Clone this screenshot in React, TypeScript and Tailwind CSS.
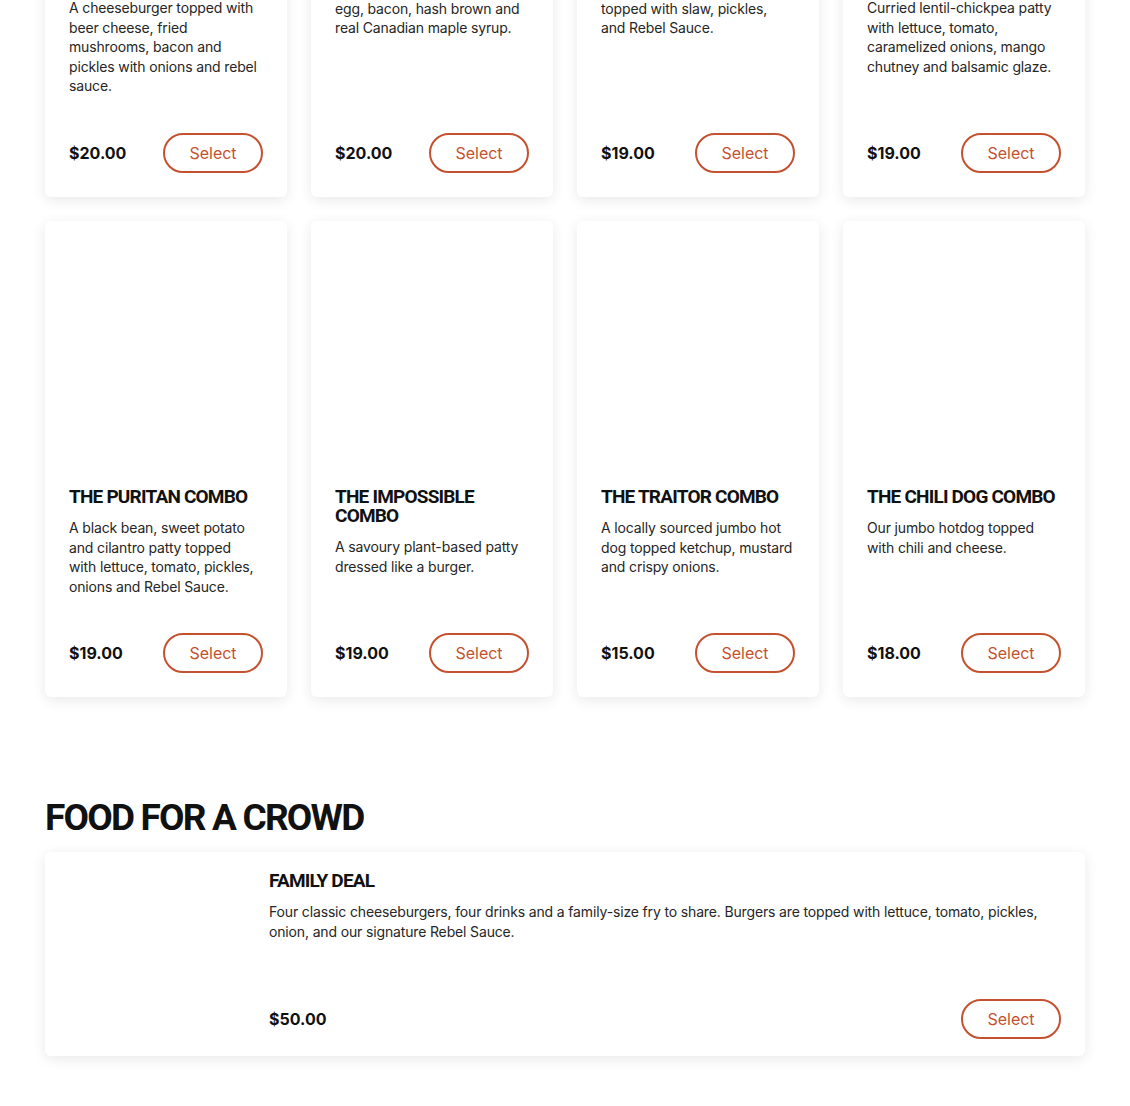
import React from "react";

interface Combo {
  name: string;
  description: string;
  price: string;
}

const combos: Combo[] = [
  {
    name: "The Drunken Mushroom Combo",
    description:
      "A cheeseburger topped with\nbeer cheese, fried\nmushrooms, bacon and\npickles with onions and rebel\nsauce.",
    price: "$20.00",
  },
  {
    name: "The Canuck Combo",
    description:
      "A cheeseburger with a fried\negg, bacon, hash brown and\nreal Canadian maple syrup.",
    price: "$20.00",
  },
  {
    name: "The Chicken Combo",
    description:
      "A crispy chicken sandwich\ntopped with slaw, pickles,\nand Rebel Sauce.",
    price: "$19.00",
  },
  {
    name: "The Curried Lentil Combo",
    description:
      "Curried lentil-chickpea patty\nwith lettuce, tomato,\ncaramelized onions, mango\nchutney and balsamic glaze.",
    price: "$19.00",
  },
  {
    name: "The Puritan Combo",
    description:
      "A black bean, sweet potato\nand cilantro patty topped\nwith lettuce, tomato, pickles,\nonions and Rebel Sauce.",
    price: "$19.00",
  },
  {
    name: "The Impossible Combo",
    description: "A savoury plant-based patty\ndressed like a burger.",
    price: "$19.00",
  },
  {
    name: "The Traitor Combo",
    description:
      "A locally sourced jumbo hot\ndog topped ketchup, mustard\nand crispy onions.",
    price: "$15.00",
  },
  {
    name: "The Chili Dog Combo",
    description: "Our jumbo hotdog topped\nwith chili and cheese.",
    price: "$18.00",
  },
];

const displayFont = "font-['Roboto','Liberation_Sans',sans-serif] font-bold uppercase";

const SelectButton: React.FC = () => (
  <button className="w-[100px] h-10 rounded-full border-2 border-[#c4512f] text-[#c4512f] text-base bg-white">
    Select
  </button>
);

const ComboCard: React.FC<{ combo: Combo }> = ({ combo }) => (
  <div className="flex flex-col bg-white rounded-md shadow-[0_3px_14px_rgba(0,0,0,0.09)] overflow-hidden">
    {/* image placeholder, photo not loaded */}
    <div className="h-[242px] bg-white" />
    <div className="flex flex-col flex-1 p-6">
      <h3
        className={`${displayFont} text-[19px] leading-[19px] tracking-[-0.8px] text-[#111]`}
      >
        {combo.name}
      </h3>
      <p className="mt-3 mb-[37px] text-sm leading-[19.6px] tracking-[-0.15px] text-[#262626] whitespace-pre-line">
        {combo.description}
      </p>
      <div className="mt-auto flex items-center justify-between">
        <span className="font-bold text-base text-[#111]">{combo.price}</span>
        <SelectButton />
      </div>
    </div>
  </div>
);

export default function App() {
  return (
    <div className="min-h-screen bg-white font-['Inter','Liberation_Sans',sans-serif] overflow-hidden">
      <div className="w-[1040px] mx-auto -mt-[318px] pb-16">
        {/* Combos */}
        <div className="grid grid-cols-4 gap-6">
          {combos.map((combo) => (
            <ComboCard key={combo.name} combo={combo} />
          ))}
        </div>

        {/* Food for a crowd */}
        <h2
          className={`${displayFont} mt-[101px] text-[37px] leading-[40px] tracking-[-1.8px] text-[#111]`}
        >
          Food for a Crowd
        </h2>
        <div className="mt-[14px] flex h-[204px] bg-white rounded-md shadow-[0_3px_14px_rgba(0,0,0,0.09)] overflow-hidden">
          <div className="w-[200px] shrink-0 bg-white" />
          <div className="flex flex-col flex-1 px-6 pt-[19px] pb-[17px]">
            <h3
              className={`${displayFont} text-[19px] leading-[19px] tracking-[-0.8px] text-[#111]`}
            >
              Family Deal
            </h3>
            <p className="mt-3 text-sm leading-[19.6px] tracking-[-0.15px] text-[#262626]">
              Four classic cheeseburgers, four drinks and a family-size fry to
              share. Burgers are topped with lettuce, tomato, pickles, onion,
              and our signature Rebel Sauce.
            </p>
            <div className="mt-auto flex items-center justify-between">
              <span className="font-bold text-base text-[#111]">$50.00</span>
              <SelectButton />
            </div>
          </div>
        </div>
      </div>
    </div>
  );
}
